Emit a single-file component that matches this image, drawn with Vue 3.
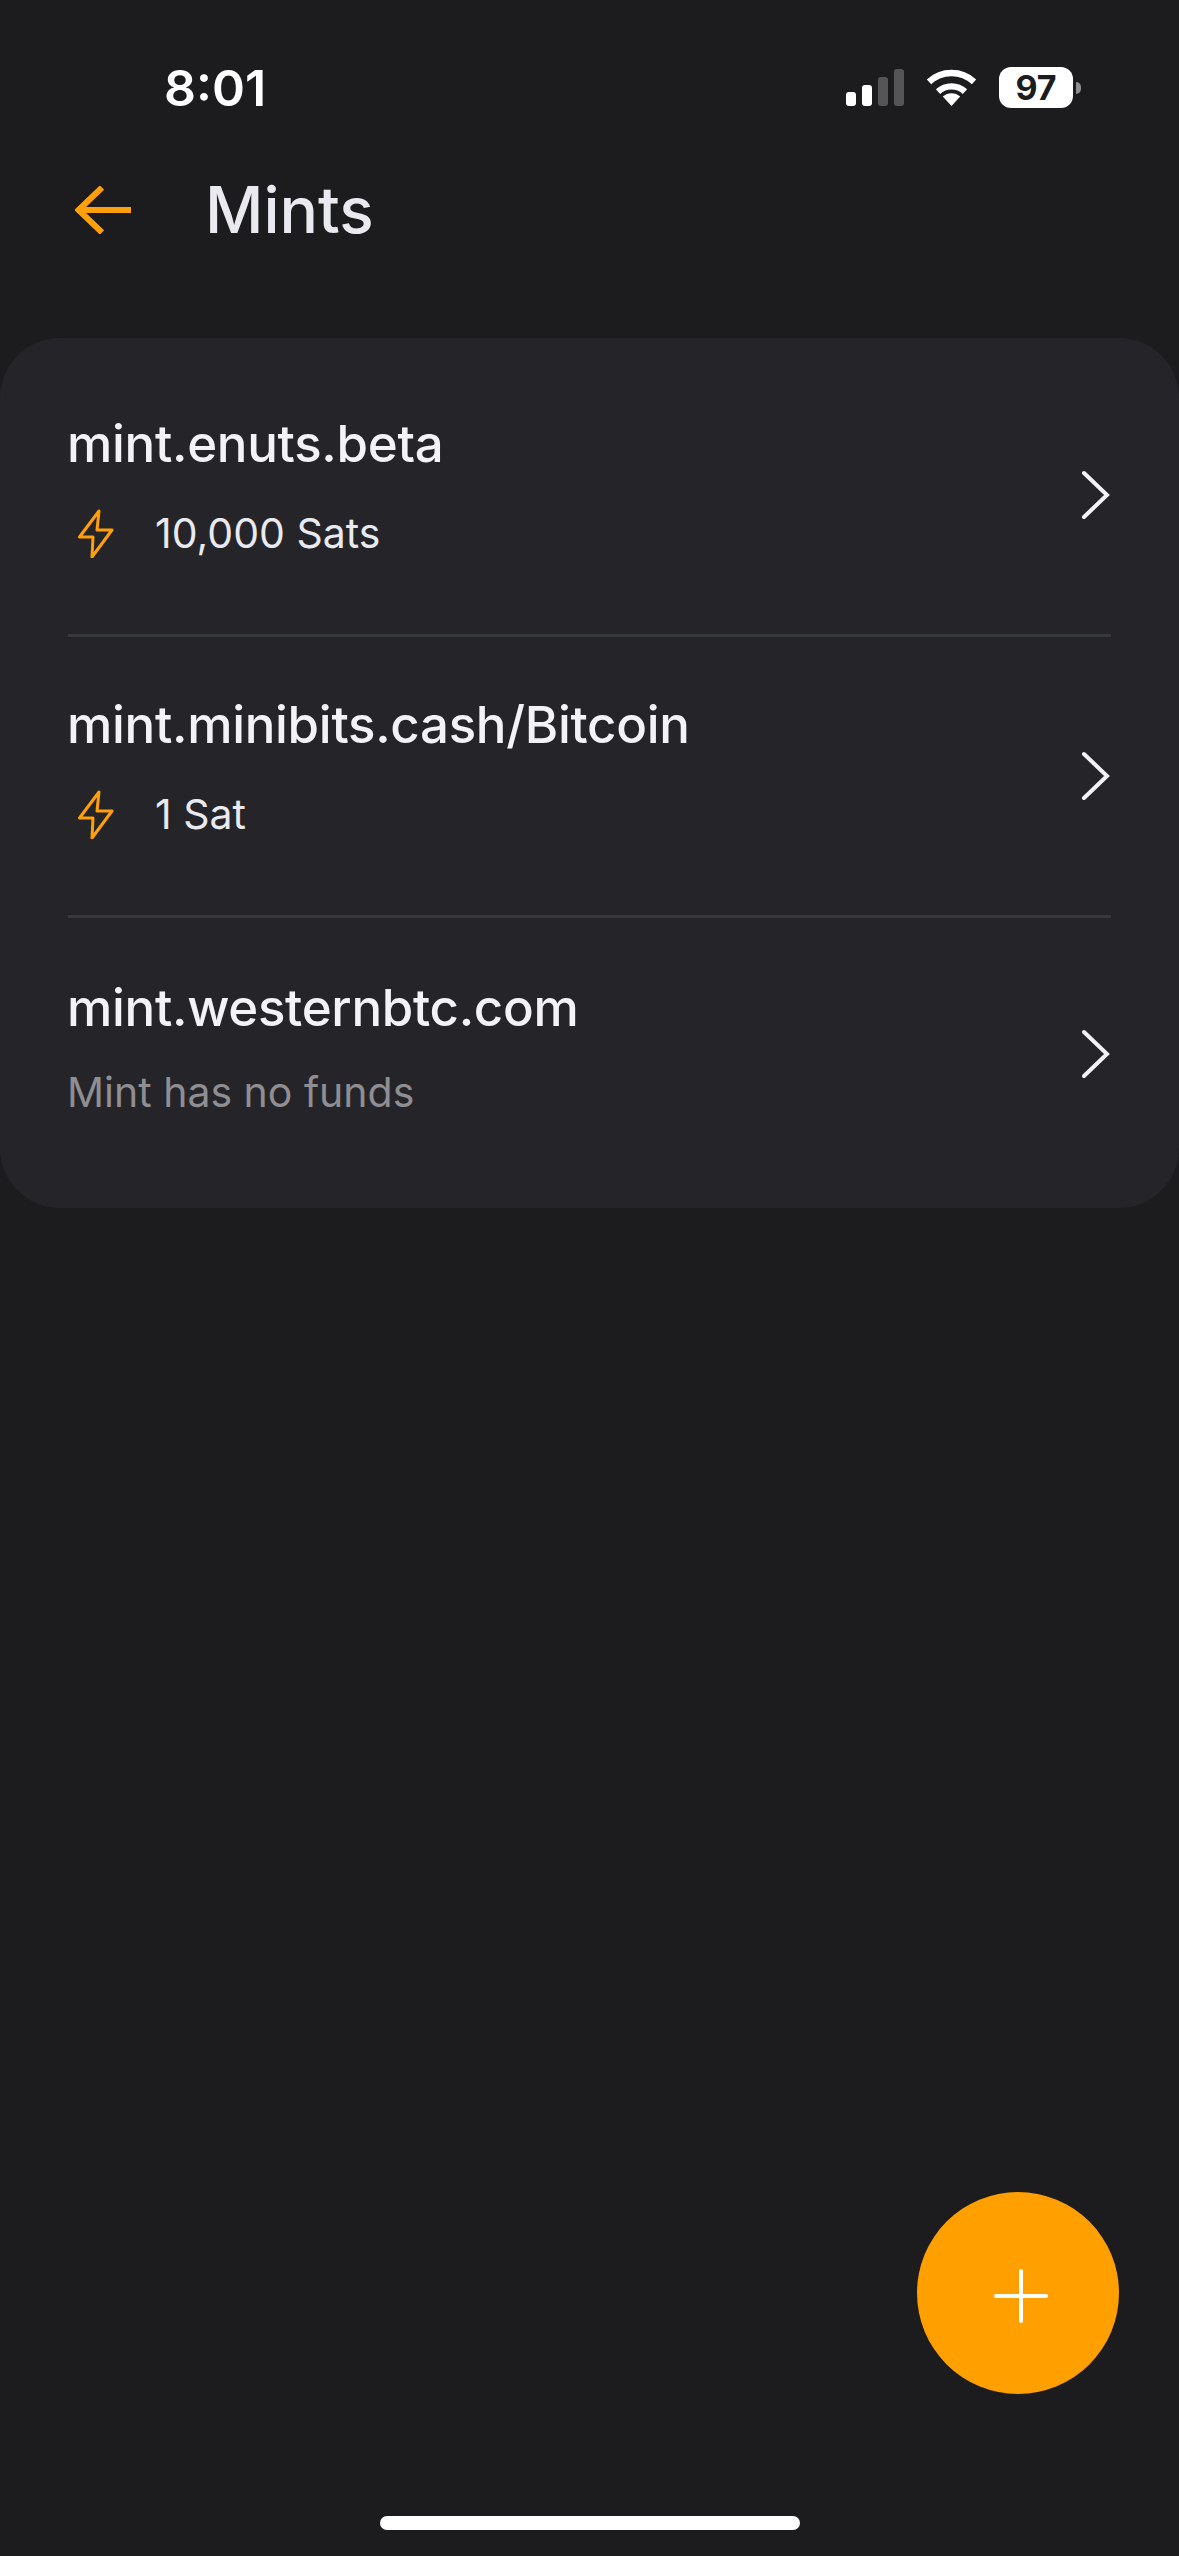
<script setup>
const mints = [
  { name: 'mint.enuts.beta', balance: '10,000 Sats' },
  { name: 'mint.minibits.cash/Bitcoin', balance: '1 Sat' },
  { name: 'mint.westernbtc.com', balance: null },
]
</script>

<template>
  <div class="screen">
    <div class="status">
      <span class="time">8:01</span>
      <div class="status-icons">
        <div class="signal">
          <i class="bar b1"></i><i class="bar b2"></i><i class="bar b3 off"></i><i class="bar b4 off"></i>
        </div>
        <svg class="wifi" width="51" height="37" viewBox="0 0 51 37">
          <path d="M25.5 37 16.8 27.6a13 13 0 0 1 17.4 0Z" fill="#fff"/>
          <path d="M12 22.6a20 20 0 0 1 27 0" fill="none" stroke="#fff" stroke-width="6.4"/>
          <path d="M3 12.8a33 33 0 0 1 45 0" fill="none" stroke="#fff" stroke-width="6.4"/>
        </svg>
        <div class="battery"><span class="pct">97</span></div>
        <i class="nub"></i>
      </div>
    </div>

    <header class="head">
      <svg class="back" width="56" height="48" viewBox="0 0 56 48" fill="none" stroke="#ff9f0a" stroke-width="6">
        <path d="M56 24H3"/>
        <path d="M27 1.5 3.5 24 27 46.5"/>
      </svg>
      <h1 class="title">Mints</h1>
    </header>

    <section class="card">
      <div v-for="(m, i) in mints" :key="m.name" class="row" :class="{ divided: i < mints.length - 1 }">
        <div class="info">
          <div class="name">{{ m.name }}</div>
          <div v-if="m.balance" class="balance">
            <svg class="bolt" width="36" height="50" viewBox="0 0 36 50" fill="none" stroke="#ff9f0a" stroke-width="3" stroke-linejoin="round">
              <path d="M21 3 1.5 29H15L14 49 34 22H19Z"/>
            </svg>
            <span>{{ m.balance }}</span>
          </div>
          <div v-else class="empty">Mint has no funds</div>
        </div>
        <svg class="chev" width="30" height="50" viewBox="0 0 30 50" fill="none" stroke="#f2f2f7" stroke-width="4" stroke-linecap="round">
          <path d="M3 3 26 25 3 47"/>
        </svg>
      </div>
    </section>

    <button class="fab" aria-label="Add mint">
      <svg width="54" height="54" viewBox="0 0 54 54" stroke="#fff" stroke-width="4" stroke-linecap="round">
        <path d="M27 2V52M2 27H52"/>
      </svg>
    </button>

    <div class="home"></div>
  </div>
</template>

<style>
html, body { margin: 0; background: #1c1c1e; }
</style>

<style scoped>
.screen {
  position: relative;
  width: 1179px;
  height: 2556px;
  overflow: hidden;
  display: flex;
  flex-direction: column;
  background: #1c1c1e;
  font-family: Inter, "Liberation Sans", sans-serif;
  color: #f2f2f7;
}
.status {
  height: 108px;
  padding: 60px 98px 0 164px;
  box-sizing: border-box;
  display: flex;
  align-items: flex-start;
  justify-content: space-between;
}
.time {
  font-size: 50px;
  line-height: 56px;
  font-weight: 600;
  color: #fff;
}
.status-icons {
  display: flex;
  align-items: center;
  height: 41px;
  margin-top: 7px;
}
.signal { display: flex; align-items: flex-end; gap: 6px; height: 37px; margin-right: 22px; }
.bar { display: block; width: 10px; background: #fff; border-radius: 3px; }
.b1 { height: 14px; }
.b2 { height: 21px; }
.b3 { height: 29px; }
.b4 { height: 37px; }
.off { background: #555557; }
.wifi { margin-right: 22px; }
.battery {
  width: 74px;
  height: 41px;
  border-radius: 12px;
  background: #fff;
  display: flex;
  align-items: center;
  justify-content: center;
}
.pct { font-size: 34px; font-weight: 700; color: #1c1c1e; line-height: 41px; }
.nub {
  display: block;
  width: 5px;
  height: 12px;
  margin-left: 3px;
  background: #8e8e93;
  border-radius: 0 6px 6px 0;
}
.head {
  display: flex;
  align-items: center;
  height: 100px;
  margin-top: 52px;
  padding-left: 75px;
}
.back { flex: none; }
.title {
  margin: 0 0 0 74px;
  font-size: 64px;
  line-height: 100px;
  font-weight: 500;
  color: #e9e9f0;
}
.card {
  margin-top: 78px;
  padding: 18px 0;
  background: #252529;
  border-radius: 60px;
  display: flex;
  flex-direction: column;
}
.row {
  position: relative;
  display: flex;
  align-items: center;
  justify-content: space-between;
  margin: 0 68px;
  height: 281px;
  box-sizing: border-box;
}
.row:last-child { height: 272px; }
.divided { border-bottom: 3px solid #38393d; }
.info { display: flex; flex-direction: column; gap: 33px; padding-bottom: 20px; }
.row:last-child .info { gap: 28px; padding-bottom: 14px; }
.name { font-size: 51px; line-height: 62px; font-weight: 500; letter-spacing: -0.3px; margin-left: -1px; color: #f2f2f7; }
.balance { display: flex; align-items: center; font-size: 41px; line-height: 50px; color: #e9e9f0; }
.bolt { margin: 0 41px 0 10px; flex: none; }
.empty { font-size: 41px; line-height: 50px; color: #8e8e93; margin-left: -1px; }
.fab {
  position: absolute;
  left: 917px;
  top: 2192px;
  width: 202px;
  height: 202px;
  border: 0;
  padding: 5px 0 0 5px;
  border-radius: 50%;
  background: #ff9f00;
  display: flex;
  align-items: center;
  justify-content: center;
}
.home {
  position: absolute;
  left: 380px;
  top: 2516px;
  width: 420px;
  height: 14px;
  border-radius: 7px;
  background: #fff;
}
</style>
